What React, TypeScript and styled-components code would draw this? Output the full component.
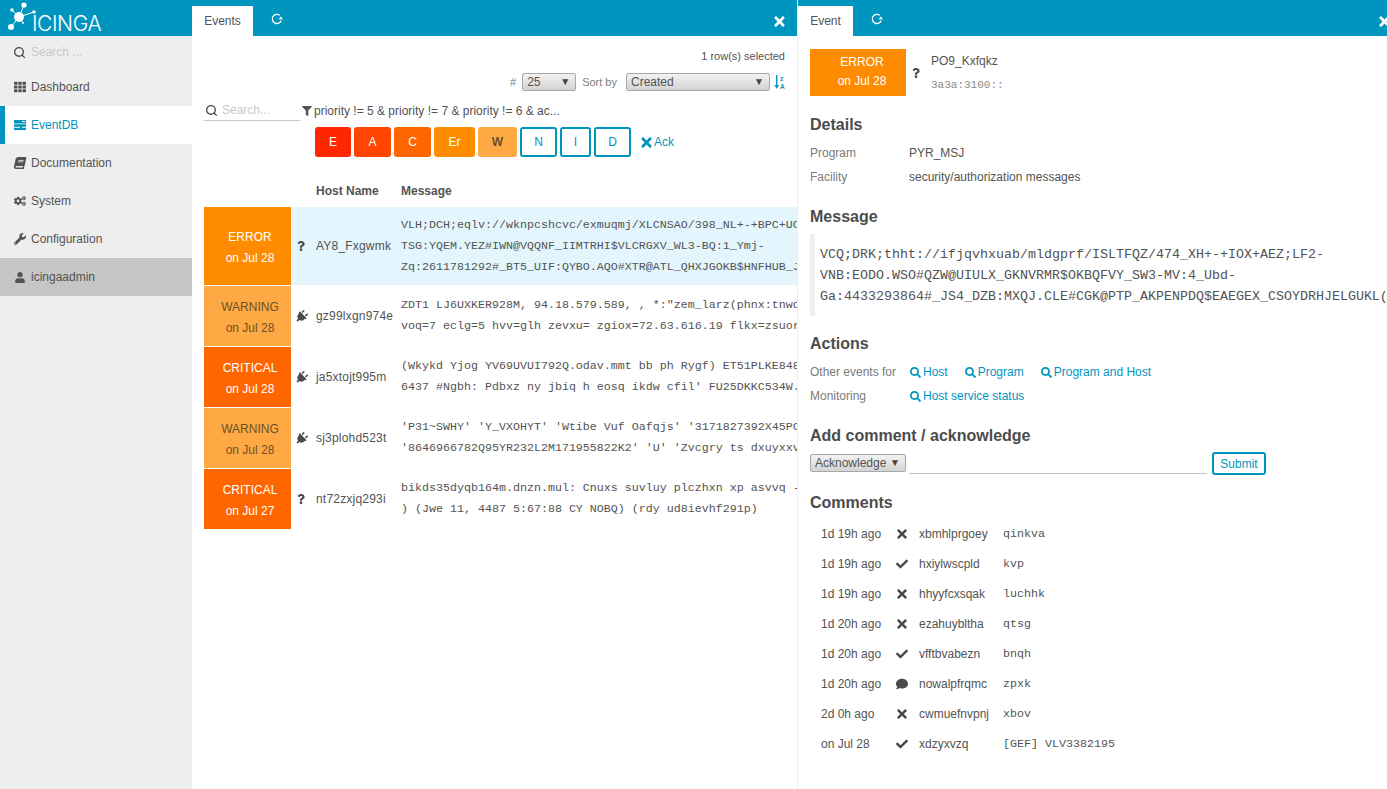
import React from "react";
import styled, { createGlobalStyle } from "styled-components";
import {
  FaBook,
  FaCheck,
  FaCogs,
  FaComment,
  FaFilter,
  FaPlug,
  FaQuestion,
  FaSearch,
  FaTh,
  FaTimes,
  FaUser,
  FaWrench,
} from "react-icons/fa";
import { FiSearch } from "react-icons/fi";

const BLUE = "#0095bf";
const TEXT = "#535353";
const MONO = `"Liberation Mono", monospace`;

const GlobalStyle = createGlobalStyle`
  html, body {
    margin: 0;
    height: 100%;
    overflow: hidden;
    background: #fff;
  }
  body {
    font-family: "Liberation Sans", Arial, sans-serif;
    font-size: 12px;
    color: ${TEXT};
  }
  * { box-sizing: border-box; }
`;

const STATE_COLORS: Record<string, { bg: string; fg: string }> = {
  emergency: { bg: "#ff2600", fg: "#fff" },
  alert: { bg: "#ff4500", fg: "#fff" },
  critical: { bg: "#ff6600", fg: "#fff" },
  error: { bg: "#ff8c00", fg: "#fff" },
  warning: { bg: "#ffa944", fg: "#6b5224" },
};

const Page = styled.div`
  display: flex;
  height: 100vh;
  width: 100vw;
  overflow: hidden;
`;

/* sidebar */
const Sidebar = styled.nav`
  width: 192px;
  flex: none;
  background: #eee;
`;

const LogoBar = styled.div`
  height: 36px;
  background: ${BLUE};
  display: flex;
  align-items: flex-end;
  padding-left: 8px;
  overflow: hidden;
`;

const LogoWord = styled.span`
  font-family: Inter, sans-serif;
  font-weight: 300;
  font-size: 21px;
  line-height: 24px;
  letter-spacing: -0.4px;
  color: #fff;
  margin-left: -4px;
`;

const SideSearch = styled.div`
  height: 32px;
  display: flex;
  align-items: center;
  padding-left: 13px;
  gap: 5px;
  color: #4a4a4a;
  font-size: 12px;
  input {
    border: 0;
    background: transparent;
    font: inherit;
    width: 130px;
    padding: 0;
    outline: none;
    &::placeholder { color: #c9c9c9; opacity: 1; }
  }
`;

const NavItem = styled.div<{ $active?: boolean; $user?: boolean }>`
  height: 38px;
  display: flex;
  align-items: center;
  gap: 5px;
  padding-left: ${(p) => (p.$active ? "9px" : "14px")};
  background: ${(p) => (p.$active ? "#fff" : p.$user ? "#c6c6c6" : "transparent")};
  border-left: ${(p) => (p.$active ? `5px solid ${BLUE}` : "0")};
  color: ${(p) => (p.$active ? BLUE : TEXT)};
  svg { width: 12px; height: 12px; flex: none; }
`;

const SlantedBook = styled(FaBook)`
  transform: skewX(-12deg);
`;

const SmallUser = styled(FaUser)`
  && { width: 10px; height: 11px; margin: 0 1px; }
`;

/* columns */
const Column = styled.section<{ $width: number; $divider?: boolean }>`
  width: ${(p) => p.$width}px;
  flex: none;
  height: 100%;
  overflow: hidden;
  display: flex;
  flex-direction: column;
  border-left: ${(p) => (p.$divider ? "1px solid #eee" : "0")};
`;

const TabBar = styled.header`
  height: 36px;
  flex: none;
  background: ${BLUE};
  display: flex;
  align-items: flex-end;
  padding-right: 12px;
  color: #fff;
`;

const Tab = styled.div<{ $width: number }>`
  width: ${(p) => p.$width}px;
  height: 30px;
  background: #fff;
  color: ${TEXT};
  display: flex;
  align-items: center;
  justify-content: center;
  padding-bottom: 1px;
`;

const Refresh = styled.svg`
  width: 12px;
  height: 12px;
  margin: 0 0 11px 18px;
`;

const CloseButton = styled.span<{ $edge?: boolean }>`
  margin-left: auto;
  margin-right: ${(p) => (p.$edge ? "-15px" : "0")};
  height: 30px;
  display: flex;
  align-items: center;
  svg { width: 11px; height: 15px; }
`;

const MainBody = styled.div`
  flex: 1;
  padding: 0 12px;
  overflow: hidden;
`;

const Selected = styled.div`
  margin-top: 13px;
  height: 14px;
  line-height: 14px;
  font-size: 11px;
  text-align: right;
`;

const SortBar = styled.div`
  margin-top: 10px;
  display: flex;
  justify-content: flex-end;
  align-items: center;
  height: 18px;
  color: #7b7b7b;
  font-size: 11px;
`;

const SelectBox = styled.div<{ $width: number; $sort?: boolean }>`
  position: relative;
  width: ${(p) => p.$width}px;
  height: 18px;
  margin: ${(p) => (p.$sort ? "0 4px 0 9px" : "0 6px")};
  border: 1px solid #a8a8a8;
  border-radius: 2px;
  background: linear-gradient(#f2f2f2, #d4d4d4);
  color: ${TEXT};
  font-size: 12px;
  line-height: 16px;
  padding-left: 4px;
  &::after {
    content: "▼";
    position: absolute;
    right: 5px;
    top: 0;
    font-size: 10px;
    color: #444;
  }
`;

const SortIcon = styled.svg`
  width: 11px;
  height: 14px;
  color: ${BLUE};
`;

const FilterArea = styled.div`
  margin-top: 9px;
  display: flex;
  height: 60px;
`;

const SearchField = styled.div`
  width: 96px;
  height: 21px;
  border-bottom: 1px solid #c9c9c9;
  display: flex;
  align-items: center;
  gap: 4px;
  padding-left: 1px;
  color: #4a4a4a;
  svg { width: 13px; height: 13px; }
  input {
    border: 0;
    font: inherit;
    width: 70px;
    padding: 0;
    outline: none;
    &::placeholder { color: #c9c9c9; opacity: 1; }
  }
`;

const FilterColumn = styled.div`
  margin-left: 2px;
`;

const FilterText = styled.div`
  height: 21px;
  display: flex;
  align-items: center;
  gap: 2px;
  svg { width: 10px; height: 10px; }
`;

const QuickRow = styled.div`
  margin: 6px 0 0 13px;
  display: flex;
  gap: 3px;
  align-items: center;
`;

const QuickButton = styled.span<{ $width: number; $state?: string }>`
  width: ${(p) => p.$width}px;
  height: 30px;
  border-radius: 3px;
  display: flex;
  align-items: center;
  justify-content: center;
  background: ${(p) => (p.$state ? STATE_COLORS[p.$state].bg : "#fff")};
  color: ${(p) => (p.$state ? STATE_COLORS[p.$state].fg : BLUE)};
  border: ${(p) => (p.$state ? "0" : `2px solid ${BLUE}`)};
  font-weight: ${(p) => (p.$state === "warning" ? 700 : 400)};
`;

const AckLink = styled.span`
  margin-left: 7px;
  color: ${BLUE};
  display: flex;
  align-items: center;
  gap: 2px;
  svg { width: 11px; height: 15px; }
`;

const TableHead = styled.div`
  margin-top: 16px;
  height: 31px;
  padding-bottom: 1px;
  display: flex;
  align-items: center;
  font-weight: 700;
  span:first-child { margin-left: 112px; width: 85px; }
`;

const Row = styled.div<{ $selected?: boolean; $tall?: boolean }>`
  height: ${(p) => (p.$tall ? 79 : 61)}px;
  display: flex;
  align-items: center;
  border-bottom: 1px solid #fff;
  background: ${(p) => (p.$selected ? "#e3f6fd" : "#fff")};
  margin-right: -12px;
  overflow: hidden;
`;

const StateCell = styled.div<{ $state: string }>`
  width: 87px;
  height: 100%;
  flex: none;
  display: flex;
  flex-direction: column;
  align-items: center;
  justify-content: center;
  padding: 3px 0 0 5px;
  line-height: 21px;
  background: ${(p) => STATE_COLORS[p.$state].bg};
  color: ${(p) => STATE_COLORS[p.$state].fg};
`;

const IconCell = styled.div`
  width: 20px;
  margin-right: 5px;
  flex: none;
  display: flex;
  justify-content: center;
  color: #4a4a4a;
  svg { width: 13px; height: 13px; }
`;

const QuestionMark = styled(FaQuestion)`
  && { width: 10px; height: 10px; }
`;

const PlugIcon = styled(FaPlug)`
  transform: rotate(45deg);
`;

const HostCell = styled.div`
  width: 85px;
  flex: none;
  white-space: nowrap;
  letter-spacing: 0.2px;
`;

const MessageCell = styled.div`
  flex: 1;
  font-family: ${MONO};
  font-size: 11.67px;
  line-height: 21px;
  white-space: pre;
  overflow: hidden;
`;

/* detail column */
const DetailBody = styled.div`
  flex: 1;
  padding: 13px 0 0 12px;
  overflow: hidden;
`;

const DetailHead = styled.div`
  display: flex;
  height: 47px;
`;

const DetailState = styled(StateCell)`
  width: 96px;
  height: 47px;
  padding: 0 0 1px 8px;
  line-height: 19px;
`;

const DetailIcon = styled.div`
  width: 19px;
  margin-right: 6px;
  flex: none;
  display: flex;
  align-items: center;
  justify-content: center;
  color: #4a4a4a;
  svg { width: 10px; height: 10px; }
`;

const HostBlock = styled.div`
  padding-top: 5px;
`;

const HostAddress = styled.div`
  margin-top: 11px;
  font-family: ${MONO};
  font-size: 11px;
  color: #8a8a8a;
`;

const Heading = styled.h2<{ $top: number }>`
  margin: ${(p) => p.$top}px 0 0;
  font-size: 16px;
  line-height: 20px;
  font-weight: 700;
  color: #4c4c4c;
`;

const InfoRow = styled.div<{ $top?: number }>`
  margin-top: ${(p) => p.$top || 0}px;
  display: flex;
  height: 24px;
  align-items: center;
`;

const InfoLabel = styled.span`
  width: 99px;
  flex: none;
  color: #7b7b7b;
`;

const QuoteBlock = styled.div`
  margin-top: 7px;
  border-left: 5px solid #eee;
  padding: 10px 0 10px 5px;
  height: 82px;
  font-family: ${MONO};
  font-size: 13.33px;
  line-height: 21px;
  white-space: pre;
`;

const ActionLink = styled.span`
  display: inline-flex;
  align-items: center;
  gap: 2px;
  color: ${BLUE};
  margin: 0 16px 0 1px;
  svg { width: 11px; height: 11px; }
`;

const CommentForm = styled.div`
  margin-top: 7px;
  display: flex;
  align-items: flex-start;
`;

const AckSelect = styled(SelectBox)`
  margin: 1px 3px 0 0;
`;

const CommentInput = styled.input`
  width: 298px;
  height: 21px;
  border: 0;
  border-bottom: 1px solid #c4c4c4;
  outline: none;
`;

const SubmitButton = styled.button`
  margin-left: 5px;
  margin-top: -1px;
  width: 54px;
  height: 23px;
  border: 2px solid ${BLUE};
  border-radius: 3px;
  background: #fff;
  color: ${BLUE};
  font: inherit;
  padding: 0;
`;

const CommentList = styled.div`
  margin-top: 6px;
`;

const CommentRow = styled.div`
  display: flex;
  align-items: center;
  height: 30px;
  padding-left: 11px;
`;

const CommentTime = styled.span`
  width: 74px;
  flex: none;
`;

const CommentIcon = styled.span`
  width: 14px;
  flex: none;
  display: flex;
  justify-content: center;
  color: #4a4a4a;
  svg { width: 12px; height: 14px; }
`;

const CommentAuthor = styled.span`
  width: 84px;
  margin-left: 10px;
  flex: none;
`;

const CommentText = styled.span`
  font-family: ${MONO};
  font-size: 11.67px;
  white-space: pre;
`;

const RefreshIcon = () => (
  <Refresh viewBox="0 0 12 12" fill="none">
    <path d="M10.3 7.4A4.6 4.6 0 1 1 8.7 2.2" stroke="#fff" strokeWidth="1.3" />
    <path d="M7.6 6.2L12 6.2 9.8 3.4z" fill="#fff" />
  </Refresh>
);

const LogoMark = () => (
  <svg width="28" height="34" viewBox="0 0 28 34" style={{ marginBottom: 2 }} fill="#fff" stroke="#fff">
    <path d="M11 17L16 5M11 17L4 10M11 17L3 27M11 17L26 12M11 17L15 23" strokeWidth="1" />
    <circle cx="11" cy="17" r="5" stroke="none" />
    <circle cx="16" cy="5" r="2.6" stroke="none" />
    <circle cx="4" cy="10" r="1.8" stroke="none" />
    <circle cx="3" cy="27" r="3" stroke="none" />
    <circle cx="26" cy="12" r="1.8" stroke="none" />
    <circle cx="15" cy="23" r="0.9" stroke="none" />
  </svg>
);

const ServerIcon = () => (
  <svg viewBox="0 0 12 12" fill="currentColor">
    <path d="M0 1h12v3.5H0zM0 5.2h12v2.6H8v1H12V11H0V8.8h6v-1H0z" />
    <path d="M8 2h3v1H8z" fill="#fff" />
  </svg>
);

const NAV = [
  { label: "Dashboard", icon: <FaTh /> },
  { label: "EventDB", icon: <ServerIcon />, active: true },
  { label: "Documentation", icon: <SlantedBook /> },
  { label: "System", icon: <FaCogs /> },
  { label: "Configuration", icon: <FaWrench /> },
  { label: "icingaadmin", icon: <SmallUser />, user: true },
];

const QUICK = [
  { label: "E", width: 36, state: "emergency" },
  { label: "A", width: 37, state: "alert" },
  { label: "C", width: 37, state: "critical" },
  { label: "Er", width: 41, state: "error" },
  { label: "W", width: 39, state: "warning" },
  { label: "N", width: 37 },
  { label: "I", width: 31 },
  { label: "D", width: 37 },
];

const EVENTS = [
  {
    state: "error",
    label: "ERROR",
    date: "on Jul 28",
    icon: "question",
    host: "AY8_Fxgwmk",
    selected: true,
    message:
      "VLH;DCH;eqlv://wknpcshcvc/exmuqmj/XLCNSAO/398_NL+-+BPC+UCQ\nTSG:YQEM.YEZ#IWN@VQQNF_IIMTRHI$VLCRGXV_WL3-BQ:1_Ymj-\nZq:2611781292#_BT5_UIF:QYBO.AQO#XTR@ATL_QHXJGOKB$HNFHUB_JKL",
  },
  {
    state: "warning",
    label: "WARNING",
    date: "on Jul 28",
    icon: "plug",
    host: "gz99lxgn974e",
    message:
      'ZDT1 LJ6UXKER928M, 94.18.579.589, , *:"zem_larz(phnx:tnwd\nvoq=7 eclg=5 hvv=glh zevxu= zgiox=72.63.616.19 flkx=zsuor',
  },
  {
    state: "critical",
    label: "CRITICAL",
    date: "on Jul 28",
    icon: "plug",
    host: "ja5xtojt995m",
    message:
      "(Wkykd Yjog YV69UVUI792Q.odav.mmt bb ph Rygf) ET51PLKE848\n6437 #Ngbh: Pdbxz ny jbiq h eosq ikdw cfil' FU25DKKC534W.",
  },
  {
    state: "warning",
    label: "WARNING",
    date: "on Jul 28",
    icon: "plug",
    host: "sj3plohd523t",
    message:
      "'P31~SWHY' 'Y_VXOHYT' 'Wtibe Vuf Oafqjs' '3171827392X45PC\n'8646966782Q95YR232L2M171955822K2' 'U' 'Zvcgry ts dxuyxxv",
  },
  {
    state: "critical",
    label: "CRITICAL",
    date: "on Jul 27",
    icon: "question",
    host: "nt72zxjq293i",
    message:
      "bikds35dyqb164m.dnzn.mul: Cnuxs suvluy plczhxn xp asvvq -\n) (Jwe 11, 4487 5:67:88 CY NOBQ) (rdy ud8ievhf291p)",
  },
];

const COMMENTS = [
  { time: "1d 19h ago", icon: "x", author: "xbmhlprgoey", text: "qinkva" },
  { time: "1d 19h ago", icon: "check", author: "hxiylwscpld", text: "kvp" },
  { time: "1d 19h ago", icon: "x", author: "hhyyfcxsqak", text: "luchhk" },
  { time: "1d 20h ago", icon: "x", author: "ezahuybltha", text: "qtsg" },
  { time: "1d 20h ago", icon: "check", author: "vfftbvabezn", text: "bnqh" },
  { time: "1d 20h ago", icon: "comment", author: "nowalpfrqmc", text: "zpxk" },
  { time: "2d 0h ago", icon: "x", author: "cwmuefnvpnj", text: "xbov" },
  { time: "on Jul 28", icon: "check", author: "xdzyxvzq", text: "[GEF] VLV3382195" },
];

const commentIcon = (name: string) => {
  if (name === "check") return <FaCheck />;
  if (name === "comment") return <FaComment />;
  return <FaTimes />;
};

export default function App() {
  return (
    <Page>
      <GlobalStyle />
      <Sidebar>
        <LogoBar>
          <LogoMark />
          <LogoWord>ICINGA</LogoWord>
        </LogoBar>
        <SideSearch>
          <FiSearch size={13} strokeWidth={2.5} />
          <input placeholder="Search ..." />
        </SideSearch>
        {NAV.map((item) => (
          <NavItem key={item.label} $active={item.active} $user={item.user}>
            {item.icon}
            {item.label}
          </NavItem>
        ))}
      </Sidebar>

      <Column $width={605}>
        <TabBar>
          <Tab $width={61}>Events</Tab>
          <RefreshIcon />
          <CloseButton>
            <FaTimes />
          </CloseButton>
        </TabBar>
        <MainBody>
          <Selected>1 row(s) selected</Selected>
          <SortBar>
            #
            <SelectBox $width={54}>25</SelectBox>
            Sort by
            <SelectBox $width={144} $sort>
              Created
            </SelectBox>
            <SortIcon viewBox="0 0 11 14" fill="currentColor">
              <path d="M2 0h1.4v10H5L2.7 14 .4 10H2z" />
              <text x="6" y="6" fontSize="6.5" fontWeight="700" fontFamily="Liberation Sans">z</text>
              <text x="6" y="13.5" fontSize="6.5" fontWeight="700" fontFamily="Liberation Sans">A</text>
            </SortIcon>
          </SortBar>
          <FilterArea>
            <SearchField>
              <FiSearch strokeWidth={2.5} />
              <input placeholder="Search..." />
            </SearchField>
            <FilterColumn>
              <FilterText>
                <FaFilter />
                priority != 5 &amp; priority != 7 &amp; priority != 6 &amp; ac...
              </FilterText>
              <QuickRow>
                {QUICK.map((q) => (
                  <QuickButton key={q.label} $width={q.width} $state={q.state}>
                    {q.label}
                  </QuickButton>
                ))}
                <AckLink>
                  <FaTimes />
                  Ack
                </AckLink>
              </QuickRow>
            </FilterColumn>
          </FilterArea>
          <TableHead>
            <span>Host Name</span>
            <span>Message</span>
          </TableHead>
          {EVENTS.map((e) => (
            <Row key={e.host} $selected={e.selected} $tall={e.selected}>
              <StateCell $state={e.state}>
                <span>{e.label}</span>
                <span>{e.date}</span>
              </StateCell>
              <IconCell>{e.icon === "plug" ? <PlugIcon /> : <QuestionMark />}</IconCell>
              <HostCell>{e.host}</HostCell>
              <MessageCell>{e.message}</MessageCell>
            </Row>
          ))}
        </MainBody>
      </Column>

      <Column $width={590} $divider>
        <TabBar>
          <Tab $width={55}>Event</Tab>
          <RefreshIcon />
          <CloseButton $edge>
            <FaTimes />
          </CloseButton>
        </TabBar>
        <DetailBody>
          <DetailHead>
            <DetailState $state="error">
              <span>ERROR</span>
              <span>on Jul 28</span>
            </DetailState>
            <DetailIcon>
              <FaQuestion />
            </DetailIcon>
            <HostBlock>
              <div>PO9_Kxfqkz</div>
              <HostAddress>3a3a:3100::</HostAddress>
            </HostBlock>
          </DetailHead>
          <Heading $top={19}>Details</Heading>
          <InfoRow $top={6}>
            <InfoLabel>Program</InfoLabel>
            PYR_MSJ
          </InfoRow>
          <InfoRow>
            <InfoLabel>Facility</InfoLabel>
            security/authorization messages
          </InfoRow>
          <Heading $top={18}>Message</Heading>
          <QuoteBlock>
            {"VCQ;DRK;thht://ifjqvhxuab/mldgprf/ISLTFQZ/474_XH+-+IOX+AEZ;LF2-\nVNB:EODO.WSO#QZW@UIULX_GKNVRMR$OKBQFVY_SW3-MV:4_Ubd-\nGa:4433293864#_JS4_DZB:MXQJ.CLE#CGK@PTP_AKPENPDQ$EAEGEX_CSOYDRHJELGUKL(Q"}
          </QuoteBlock>
          <Heading $top={18}>Actions</Heading>
          <InfoRow $top={6}>
            <InfoLabel>Other events for</InfoLabel>
            <ActionLink>
              <FaSearch />
              Host
            </ActionLink>
            <ActionLink>
              <FaSearch />
              Program
            </ActionLink>
            <ActionLink>
              <FaSearch />
              Program and Host
            </ActionLink>
          </InfoRow>
          <InfoRow>
            <InfoLabel>Monitoring</InfoLabel>
            <ActionLink>
              <FaSearch />
              Host service status
            </ActionLink>
          </InfoRow>
          <Heading $top={18}>Add comment / acknowledge</Heading>
          <CommentForm>
            <AckSelect $width={96}>Acknowledge</AckSelect>
            <CommentInput />
            <SubmitButton>Submit</SubmitButton>
          </CommentForm>
          <Heading $top={18}>Comments</Heading>
          <CommentList>
            {COMMENTS.map((c) => (
              <CommentRow key={c.author}>
                <CommentTime>{c.time}</CommentTime>
                <CommentIcon>{commentIcon(c.icon)}</CommentIcon>
                <CommentAuthor>{c.author}</CommentAuthor>
                <CommentText>{c.text}</CommentText>
              </CommentRow>
            ))}
          </CommentList>
        </DetailBody>
      </Column>
    </Page>
  );
}
